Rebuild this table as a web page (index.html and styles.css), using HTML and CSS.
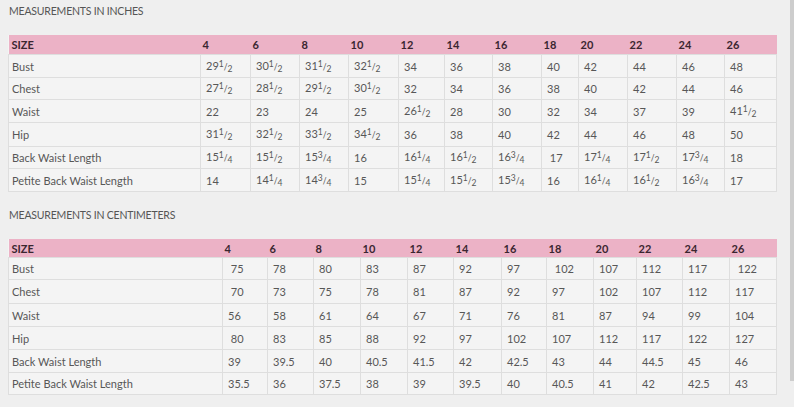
FILE: index.html
```html
<!DOCTYPE html>
<html>
<head>
<meta charset="utf-8">
<link rel="stylesheet" href="styles.css">
</head>
<body>
<div class="page">
  <h2 class="title">MEASUREMENTS IN INCHES</h2>
  <table class="chart">
    <colgroup>
      <col style="width:192px"><col style="width:50px"><col style="width:49px"><col style="width:49px"><col style="width:50px"><col style="width:46px"><col style="width:48px"><col style="width:49px"><col style="width:37px"><col style="width:49px"><col style="width:49px"><col style="width:48px"><col style="width:52px">
    </colgroup>
    <thead>
      <tr><th>SIZE</th><th>4</th><th>6</th><th>8</th><th>10</th><th>12</th><th>14</th><th>16</th><th>18</th><th>20</th><th>22</th><th>24</th><th>26</th></tr>
    </thead>
    <tbody>
      <tr><td>Bust</td><td>29<span class="fr"><sup>1</sup>/<sub>2</sub></span></td><td>30<span class="fr"><sup>1</sup>/<sub>2</sub></span></td><td>31<span class="fr"><sup>1</sup>/<sub>2</sub></span></td><td>32<span class="fr"><sup>1</sup>/<sub>2</sub></span></td><td>34</td><td>36</td><td>38</td><td>40</td><td>42</td><td>44</td><td>46</td><td>48</td></tr>
      <tr class="r22"><td>Chest</td><td>27<span class="fr"><sup>1</sup>/<sub>2</sub></span></td><td>28<span class="fr"><sup>1</sup>/<sub>2</sub></span></td><td>29<span class="fr"><sup>1</sup>/<sub>2</sub></span></td><td>30<span class="fr"><sup>1</sup>/<sub>2</sub></span></td><td>32</td><td>34</td><td>36</td><td>38</td><td>40</td><td>42</td><td>44</td><td>46</td></tr>
      <tr><td>Waist</td><td>22</td><td>23</td><td>24</td><td>25</td><td>26<span class="fr"><sup>1</sup>/<sub>2</sub></span></td><td>28</td><td>30</td><td>32</td><td>34</td><td>37</td><td>39</td><td>41<span class="fr"><sup>1</sup>/<sub>2</sub></span></td></tr>
      <tr class="r24"><td>Hip</td><td>31<span class="fr"><sup>1</sup>/<sub>2</sub></span></td><td>32<span class="fr"><sup>1</sup>/<sub>2</sub></span></td><td>33<span class="fr"><sup>1</sup>/<sub>2</sub></span></td><td>34<span class="fr"><sup>1</sup>/<sub>2</sub></span></td><td>36</td><td>38</td><td>40</td><td>42</td><td>44</td><td>46</td><td>48</td><td>50</td></tr>
      <tr class="r22"><td>Back Waist Length</td><td>15<span class="fr"><sup>1</sup>/<sub>4</sub></span></td><td>15<span class="fr"><sup>1</sup>/<sub>2</sub></span></td><td>15<span class="fr"><sup>3</sup>/<sub>4</sub></span></td><td>16</td><td>16<span class="fr"><sup>1</sup>/<sub>4</sub></span></td><td>16<span class="fr"><sup>1</sup>/<sub>2</sub></span></td><td>16<span class="fr"><sup>3</sup>/<sub>4</sub></span></td><td>&nbsp;17</td><td>17<span class="fr"><sup>1</sup>/<sub>4</sub></span></td><td>17<span class="fr"><sup>1</sup>/<sub>2</sub></span></td><td>17<span class="fr"><sup>3</sup>/<sub>4</sub></span></td><td>18</td></tr>
      <tr><td>Petite Back Waist Length</td><td>14</td><td>14<span class="fr"><sup>1</sup>/<sub>4</sub></span></td><td>14<span class="fr"><sup>3</sup>/<sub>4</sub></span></td><td>15</td><td>15<span class="fr"><sup>1</sup>/<sub>4</sub></span></td><td>15<span class="fr"><sup>1</sup>/<sub>2</sub></span></td><td>15<span class="fr"><sup>3</sup>/<sub>4</sub></span></td><td>16</td><td>16<span class="fr"><sup>1</sup>/<sub>4</sub></span></td><td>16<span class="fr"><sup>1</sup>/<sub>2</sub></span></td><td>16<span class="fr"><sup>3</sup>/<sub>4</sub></span></td><td>17</td></tr>
    </tbody>
  </table>

  <h2 class="title title-cm">MEASUREMENTS IN CENTIMETERS</h2>
  <table class="chart">
    <colgroup>
      <col style="width:214px"><col style="width:45px"><col style="width:46px"><col style="width:47px"><col style="width:47px"><col style="width:46px"><col style="width:48px"><col style="width:45px"><col style="width:47px"><col style="width:43px"><col style="width:46px"><col style="width:47px"><col style="width:47px">
    </colgroup>
    <thead>
      <tr class="h18"><th>SIZE</th><th>4</th><th>6</th><th>8</th><th>10</th><th>12</th><th>14</th><th>16</th><th>18</th><th>20</th><th>22</th><th>24</th><th>26</th></tr>
    </thead>
    <tbody>
      <tr class="r22"><td>Bust</td><td>&nbsp;75</td><td>78</td><td>80</td><td>83</td><td>87</td><td>92</td><td>97</td><td>&nbsp;102</td><td>107</td><td>112</td><td>117</td><td>&nbsp;122</td></tr>
      <tr class="r24"><td>Chest</td><td>&nbsp;70</td><td>73</td><td>75</td><td>78</td><td>81</td><td>87</td><td>92</td><td>97</td><td>102</td><td>107</td><td>112</td><td>117</td></tr>
      <tr><td>Waist</td><td>56</td><td>58</td><td>61</td><td>64</td><td>67</td><td>71</td><td>76</td><td>81</td><td>87</td><td>94</td><td>99</td><td>104</td></tr>
      <tr><td>Hip</td><td>&nbsp;80</td><td>83</td><td>85</td><td>88</td><td>92</td><td>97</td><td>102</td><td>107</td><td>112</td><td>117</td><td>122</td><td>127</td></tr>
      <tr><td>Back Waist Length</td><td>39</td><td>39.5</td><td>40</td><td>40.5</td><td>41.5</td><td>42</td><td>42.5</td><td>43</td><td>44</td><td>44.5</td><td>45</td><td>46</td></tr>
      <tr class="r22"><td>Petite Back Waist Length</td><td>35.5</td><td>36</td><td>37.5</td><td>38</td><td>39</td><td>39.5</td><td>40</td><td>40.5</td><td>41</td><td>42</td><td>42.5</td><td>43</td></tr>
    </tbody>
  </table>
</div>
<div class="scroll-thumb"></div>
</body>
</html>
```

FILE: styles.css
```css
html, body {
  margin: 0;
  padding: 0;
  background: #efefef;
}

body {
  font-family: Lato, "Open Sans", "Liberation Sans", sans-serif;
  color: #4d4d4d;
  width: 794px;
  height: 407px;
  overflow: hidden;
}

.page {
  padding: 4px 0 0 8px;
}

.title {
  margin: 0 0 17px 1px;
  font-size: 10.5px;
  line-height: 14px;
  font-weight: 400;
  color: #555555;
  letter-spacing: -0.2px;
}

.title-cm {
  margin-top: 16px;
}

.chart {
  border-collapse: collapse;
  table-layout: fixed;
  width: 768px;
  background: #f4f4f4;
  font-size: 11px;
}

.chart th {
  background: #ecb2c6;
  color: #3a2630;
  font-weight: 700;
  text-align: left;
  height: 19px;
  padding: 0 0 0 2px;
  border: none;
  font-size: 11px;
}

.chart th:first-child {
  padding-left: 3px;
}

.chart .h18 th {
  height: 18px;
}

.chart td {
  height: 22px;
  padding: 0 0 0 5px;
  border: 1px solid #dedede;
  color: #575757;
  white-space: nowrap;
}

.chart td:first-child {
  padding-left: 3px;
}

.chart .r22 td {
  height: 21px;
}

.chart .r24 td {
  height: 23px;
}

.fr {
  font-size: 8.5px;
  letter-spacing: 0;
}

.fr sup {
  vertical-align: 3px;
  font-size: 8.5px;
}

.fr sub {
  vertical-align: -2px;
  font-size: 8.5px;
}

.scroll-thumb {
  position: absolute;
  top: 0;
  left: 790px;
  width: 4px;
  height: 381px;
  background: #cdcdcd;
}
```
